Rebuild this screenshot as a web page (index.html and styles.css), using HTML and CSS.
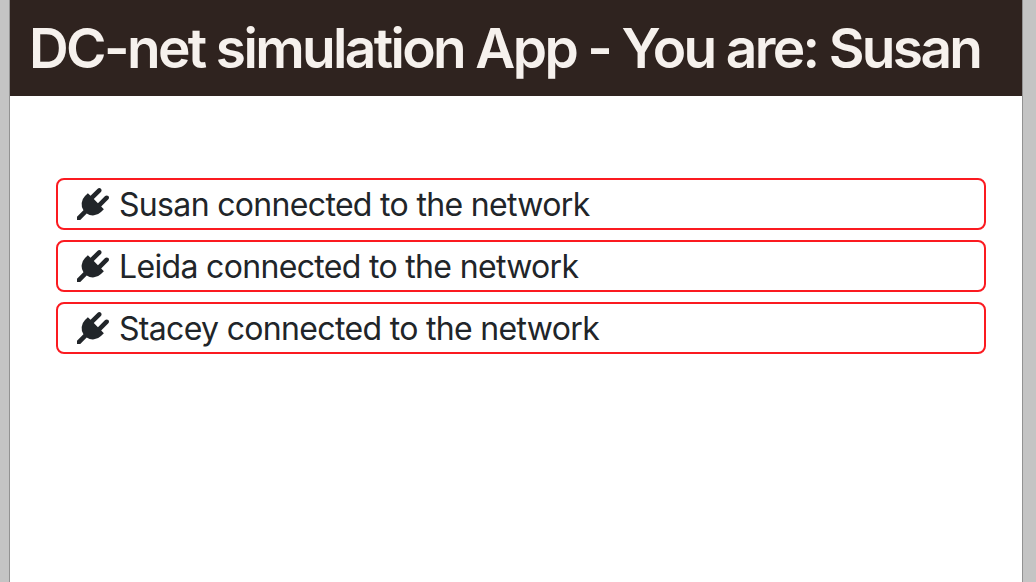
FILE: index.html
```html
<!DOCTYPE html>
<html lang="en">
<head>
<meta charset="utf-8">
<title>DC-net simulation App</title>
<link rel="stylesheet" href="styles.css">
</head>
<body>
<svg class="defs" width="0" height="0"><symbol id="plug" viewBox="0 0 1792 1792"><path fill="currentColor" d="M1755 453q37 38 37 90.500t-37 90.500l-401 400 150 150-160 160q-163 163-389.500 186.500t-411.500-100.500l-362 362h-181v-181l362-362q-124-185-100.500-411.500t186.500-389.500l160-160 150 150 400-401q38-37 91-37t90 37 37 90.500-37 90.500l-400 401 234 234 401-400q38-37 91-37t90 37z"/></symbol></svg>
<div class="window">
<header class="header"><h1 class="title">DC-net simulation App - You are: Susan</h1></header>
<main class="log">
<div class="entry"><svg class="icon"><use href="#plug"/></svg><span class="message">Susan connected to the network</span></div>
<div class="entry"><svg class="icon"><use href="#plug"/></svg><span class="message">Leida connected to the network</span></div>
<div class="entry"><svg class="icon"><use href="#plug"/></svg><span class="message">Stacey connected to the network</span></div>
</main>
</div>
</body>
</html>
```
FILE: styles.css
```css
* { box-sizing: border-box; }
body { margin: 0; height: 582px; overflow: hidden; background: #c4c4c4; font-family: Inter, "Liberation Sans", sans-serif; color: #212529; }
.defs { position: absolute; }
.window { height: 582px; margin: 0 14px 0 10px; background: #fff; box-shadow: 0 0 0 1px #929292; }
.header { height: 96px; padding: 16px 19px; background: #2f231f; }
.title { margin: 0; font-size: 55px; line-height: 64px; font-weight: 600; letter-spacing: -2.64px; white-space: nowrap; color: #f6f1ed; }
.log { display: flex; flex-direction: column; gap: 10px; padding: 82px 36px 0 46px; }
.entry { display: flex; align-items: center; height: 52px; padding-left: 19px; border: 2px solid #fb1a20; border-radius: 8px; }
.icon { width: 32px; height: 32px; margin-right: 10px; overflow: visible; }
.message { padding-top: 2px; font-size: 32px; line-height: 48px; letter-spacing: -0.67px; white-space: nowrap; }
```
